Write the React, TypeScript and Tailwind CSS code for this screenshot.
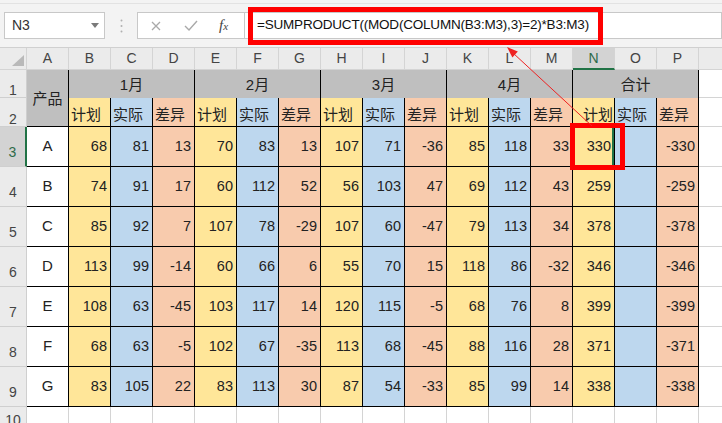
import React from 'react';

const rows: [string, (number | null)[]][] = [
  ['A', [68, 81, 13, 70, 83, 13, 107, 71, -36, 85, 118, 33, 330, null, -330]],
  ['B', [74, 91, 17, 60, 112, 52, 56, 103, 47, 69, 112, 43, 259, null, -259]],
  ['C', [85, 92, 7, 107, 78, -29, 107, 60, -47, 79, 113, 34, 378, null, -378]],
  ['D', [113, 99, -14, 60, 66, 6, 55, 70, 15, 118, 86, -32, 346, null, -346]],
  ['E', [108, 63, -45, 103, 117, 14, 120, 115, -5, 68, 76, 8, 399, null, -399]],
  ['F', [68, 63, -5, 102, 67, -35, 113, 68, -45, 88, 116, 28, 371, null, -371]],
  ['G', [83, 105, 22, 83, 113, 30, 87, 54, -33, 85, 99, 14, 338, null, -338]],
];

const bgs = ['bg-[#ffe699]', 'bg-[#bdd7ee]', 'bg-[#f8cbad]'];
const subs = ['计划', '实际', '差异'];
const letters = 'ABCDEFGHIJKLMNOP'.split('');
const months = ['1月', '2月', '3月', '4月', '合计'];

const hdr = 'border-r border-b border-[#d4d4d4] bg-[#ebebeb] text-[14px] text-[#444]';
const rowHdr = 'flex justify-center leading-[16px] border-r border-b border-[#cfcfcf] bg-[#ebebeb] text-[14px] text-[#444]';

export default function App() {
  const cells: React.ReactNode[] = [];

  // column header row
  cells.push(
    <div key="corner" className={`relative ${hdr}`}>
      <svg className="absolute right-[2px] bottom-[3px]" width="12" height="11" viewBox="0 0 12 11">
        <polygon points="12,0 12,11 0,11" fill="#b9b9b9" />
      </svg>
    </div>
  );
  letters.forEach((l) => {
    const sel = l === 'N';
    cells.push(
      <div
        key={'h' + l}
        className={
          sel
            ? 'flex items-center justify-center border-r border-[#d4d4d4] border-b-2 border-b-[#217346] bg-[#d3d3d3] text-[14px] text-[#2f6b4a]'
            : `flex items-center justify-center ${hdr}`
        }
      >
        {l}
      </div>
    );
  });
  cells.push(<div key="hQ" className="border-b border-[#d4d4d4] bg-[#ebebeb]" />);

  // row 1
  cells.push(
    <div key="r1" className={`${rowHdr} pt-[12px]`}>1</div>
  );
  cells.push(
    <div key="A1" className="row-span-2 flex items-center justify-center border-r border-b border-black bg-[#bfbfbf] pt-[3px] text-[15px] text-[#222]">
      产品
    </div>
  );
  months.forEach((m) => {
    cells.push(
      <div key={'m' + m} className="col-span-3 flex items-center justify-center border-r border-black bg-[#bfbfbf] pt-[2px] text-[15px] text-[#222]">
        {m}
      </div>
    );
  });
  cells.push(<div key="Q1" className="border-b border-[#d4d4d4] bg-white" />);

  // row 2
  cells.push(<div key="r2" className={`${rowHdr} pt-[13px]`}>2</div>);
  for (let i = 0; i < 15; i++) {
    cells.push(
      <div
        key={'s' + i}
        className={`flex items-end border-r border-b border-black pb-[1px] text-[15px] leading-[20px] text-[#222] ${bgs[i % 3]} ${i === 12 ? 'pl-[10px]' : 'pl-[2px]'}`}
      >
        {subs[i % 3]}
      </div>
    );
  }
  cells.push(<div key="Q2" className="border-b border-[#d4d4d4] bg-white" />);

  // data rows
  rows.forEach(([name, vals], ri) => {
    const rn = ri + 3;
    const sel = rn === 3;
    cells.push(
      <div
        key={'r' + rn}
        className={
          sel
            ? 'flex justify-center leading-[16px] border-b border-[#cfcfcf] border-r-2 border-r-[#217346] bg-[#d3d3d3] pt-[17px] text-[14px] text-[#2f6b4a]'
            : `${rowHdr} pt-[17px]`
        }
      >
        {rn}
      </div>
    );
    cells.push(
      <div key={'a' + rn} className="flex items-center justify-center border-r border-b border-black bg-white text-[15px] text-[#222]">
        {name}
      </div>
    );
    vals.forEach((v, ci) => {
      const isN3 = sel && ci === 12;
      cells.push(
        <div
          key={'d' + rn + '-' + ci}
          className={`flex items-center justify-end border-r border-b border-black pr-[3px] text-[14.5px] text-[#222] ${bgs[ci % 3]} ${isN3 ? 'shadow-[inset_-2px_0_0_#217346]' : ''}`}
        >
          {v === null ? '' : v}
        </div>
      );
    });
    cells.push(<div key={'q' + rn} className="border-b border-[#d4d4d4] bg-white" />);
  });

  // row 10
  cells.push(<div key="r10" className={`${rowHdr} pt-[5px]`}>10</div>);
  for (let i = 0; i < 16; i++) {
    cells.push(<div key={'e' + i} className="border-r border-b border-[#d4d4d4] bg-white" />);
  }
  cells.push(<div key="q10" className="border-b border-[#d4d4d4] bg-white" />);

  return (
    <div className="relative h-[423px] w-[722px] overflow-hidden bg-white font-['Liberation_Sans','Noto_Sans_CJK_SC',sans-serif]">
      {/* toolbar */}
      <div className="flex h-[48px] flex-col border-b border-[#d0d0d0] bg-[#f3f3f3]">
        <div className="h-[4px] border-b border-[#e2e2e2]" />
        <div className="flex items-start pt-[8px]">
          <div className="ml-[4px] flex h-[27px] w-[101px] items-center justify-between border border-[#c8c8c8] bg-white pl-[7px] pr-[5px] text-[14px] text-[#333]">
            <span>N3</span>
            <svg width="8" height="5" viewBox="0 0 8 5">
              <polygon points="0,0 8,0 4,5" fill="#7a7a7a" />
            </svg>
          </div>
          <div className="flex h-[27px] w-[32px] items-center justify-center">
            <svg width="3" height="14" viewBox="0 0 3 14">
              <circle cx="1.5" cy="1.5" r="1" fill="#b0b0b0" />
              <circle cx="1.5" cy="7" r="1" fill="#b0b0b0" />
              <circle cx="1.5" cy="12.5" r="1" fill="#b0b0b0" />
            </svg>
          </div>
          <div className="flex h-[27px] w-[108px] items-center border border-[#c8c8c8] bg-white">
            <svg className="ml-[13px]" width="10" height="10" viewBox="0 0 10 10">
              <path d="M1 1 L9 9 M9 1 L1 9" stroke="#a9a9a9" strokeWidth="1.3" fill="none" />
            </svg>
            <svg className="ml-[23px]" width="14" height="11" viewBox="0 0 14 11">
              <path d="M1 6 L5 10 L13 1" stroke="#a9a9a9" strokeWidth="1.4" fill="none" />
            </svg>
            <span className="ml-[21px] font-['Liberation_Serif',serif] text-[15px] italic text-[#444]">
              f<span className="text-[11px]">x</span>
            </span>
          </div>
          <div className="flex h-[27px] flex-1 items-center border-y border-r border-[#c8c8c8] bg-white pl-[12px] text-[13.5px] tracking-[-0.2px] text-[#111]">
            =SUMPRODUCT((MOD(COLUMN(B3:M3),3)=2)*B3:M3)
          </div>
        </div>
      </div>

      {/* sheet */}
      <div className="grid grid-cols-[27px_repeat(16,42px)_23px] grid-rows-[22px_28px_29px_repeat(7,40px)_40px]">
        {cells}
      </div>

      {/* annotations */}
      <div className="pointer-events-none absolute left-[248px] top-[7px] h-[38px] w-[355px] border-[5px] border-[#ff0000]" />
      <div className="pointer-events-none absolute left-[570px] top-[123px] h-[47px] w-[55px] border-[5px] border-[#ff0000]" />
      <svg className="pointer-events-none absolute left-0 top-0" width="722" height="423" viewBox="0 0 722 423">
        <line x1="592" y1="126" x2="513" y2="53" stroke="#ee2222" strokeWidth="1" />
        <polygon points="507,47 517.8,51.6 512.4,57.4" fill="#ee2222" />
      </svg>
    </div>
  );
}
